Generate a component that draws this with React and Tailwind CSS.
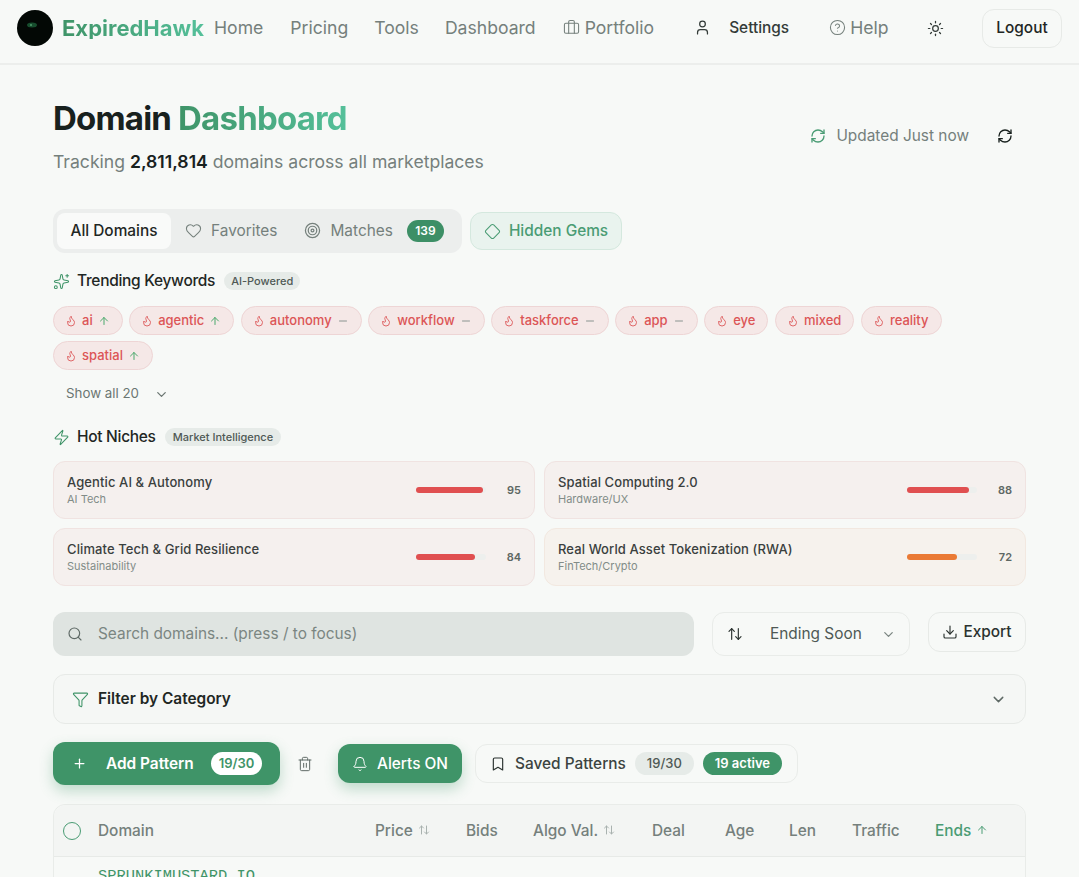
import {
  ArrowUp,
  ArrowUpDown,
  Bell,
  Bookmark,
  Briefcase,
  ChevronDown,
  CircleHelp,
  Diamond,
  Download,
  Filter,
  Flame,
  Heart,
  Minus,
  Plus,
  RefreshCw,
  Search,
  Sparkles,
  Sun,
  Target,
  Trash2,
  User,
  Zap,
} from "lucide-react";

const keywords = [
  { name: "ai", trend: "up" },
  { name: "agentic", trend: "up" },
  { name: "autonomy", trend: "flat" },
  { name: "workflow", trend: "flat" },
  { name: "taskforce", trend: "flat" },
  { name: "app", trend: "flat" },
  { name: "eye" },
  { name: "mixed" },
  { name: "reality" },
  { name: "spatial", trend: "up" },
];

const niches = [
  { name: "Agentic AI & Autonomy", cat: "AI Tech", score: 95 },
  { name: "Spatial Computing 2.0", cat: "Hardware/UX", score: 88 },
  { name: "Climate Tech & Grid Resilience", cat: "Sustainability", score: 84 },
  { name: "Real World Asset Tokenization (RWA)", cat: "FinTech/Crypto", score: 72, warm: true },
];

function Keyword({ name, trend }) {
  return (
    <span className="flex h-[29px] items-center gap-[5px] rounded-full border border-[#eed5d5] bg-[#f5e8e7] pl-[11px] pr-[12px] text-[13px] font-medium text-[#dc5556]">
      <Flame size={12} strokeWidth={1.75} />
      {name}
      {trend === "up" && <ArrowUp size={12} className="text-[#4aa96c]" />}
      {trend === "flat" && <Minus size={12} className="text-[#8a9490]" />}
    </span>
  );
}

function NicheCard({ name, cat, score, warm }) {
  return (
    <div
      className={
        warm
          ? "flex h-[58px] items-center rounded-xl border border-[#f2e8e0] bg-[#f6f2ed] pl-[13px] pr-[4px]"
          : "flex h-[58px] items-center rounded-xl border border-[#f0e3e1] bg-[#f5f0ee] pl-[13px] pr-[4px]"
      }
    >
      <div className="min-w-0 flex-1">
        <div className="text-[13px] font-medium leading-[18px] tracking-[0.1px] text-[#3a403e]">{name}</div>
        <div className="mt-[1px] text-[11px] leading-[15px] text-[#828c88]">{cat}</div>
      </div>
      <div className="h-[6px] w-[70px] rounded-full bg-[#edefed]">
        <div
          className={warm ? "h-full rounded-full bg-[#ea7a35]" : "h-full rounded-full bg-[#e04f50]"}
          style={{ width: `${score}%` }}
        />
      </div>
      <div className="w-[44px] pr-[9px] text-right text-[11px] font-semibold text-[#5d6763]">{score}</div>
    </div>
  );
}

function Th({ children, className = "", sort }) {
  return (
    <div className={`flex items-center gap-[5px] ${className}`}>
      {children}
      {sort && <ArrowUpDown size={12} className="text-[#a9b2af]" />}
    </div>
  );
}

export default function App() {
  return (
    <div
      className="h-[877px] overflow-hidden bg-[#f7f9f7] text-[#18211e]"
      style={{ fontFamily: "Inter, 'Liberation Sans', sans-serif" }}
    >
      <header className="flex h-[65px] items-center border-b-2 border-[#eceeec] pb-[7px] pl-[17px] pr-[17px]">
        <svg width="36" height="36" viewBox="0 0 36 36" className="shrink-0">
          <circle cx="18" cy="18" r="18" fill="#030805" />
          <ellipse cx="15" cy="15" rx="5" ry="2.5" fill="#174d2e" />
          <circle cx="14" cy="15" r="1" fill="#4f9d6e" />
        </svg>
        <span className="ml-[9px] bg-gradient-to-r from-[#3f9468] to-[#55c09a] bg-clip-text text-[22px] font-bold leading-none text-transparent">
          ExpiredHawk
        </span>
        <nav className="ml-[10px] flex items-center text-[17.6px] text-[#75807c]">
          <span>Home</span>
          <span className="ml-[27px]">Pricing</span>
          <span className="ml-[26px]">Tools</span>
          <span className="ml-[26px]">Dashboard</span>
          <span className="ml-[27px] flex items-center gap-[5px]">
            <Briefcase size={17} strokeWidth={1.5} />
            Portfolio
          </span>
        </nav>
        <div className="ml-[40px] flex items-center text-[15.4px] font-medium text-[#333b38]">
          <User size={17} strokeWidth={1.75} />
          <span className="ml-[18px]">Settings</span>
        </div>
        <div className="ml-[40px] flex items-center gap-[4px] text-[17.6px] text-[#75807c]">
          <CircleHelp size={17} strokeWidth={1.5} />
          Help
        </div>
        <Sun size={17} strokeWidth={1.75} className="ml-[38px] text-[#333b38]" />
        <button className="ml-auto h-[39px] w-[80px] rounded-xl border border-[#e7eae7] text-[15.4px] font-medium text-[#1f2724]">
          Logout
        </button>
      </header>

      <main className="px-[53px]">
        <div className="flex items-start justify-between pt-[31px]">
          <div>
            <h1 className="text-[33px] font-bold leading-[44px] tracking-[-0.8px]">
              Domain{" "}
              <span className="bg-gradient-to-r from-[#3f9468] to-[#55c09a] bg-clip-text text-transparent">Dashboard</span>
            </h1>
            <p className="mt-[10px] text-[17.6px] leading-[24px] text-[#75807c]">
              Tracking <span className="font-semibold text-[#18211e]">2,811,814</span> domains across all marketplaces
            </p>
          </div>
          <div className="mt-[28px] flex items-center text-[15.4px] text-[#75807c]">
            <RefreshCw size={16} className="text-[#4a9c74]" />
            <span className="ml-[10px]">Updated Just now</span>
            <RefreshCw size={16} className="ml-[28px] mr-[13px] text-[#18211e]" />
          </div>
        </div>

        <div className="mt-[35px] flex items-center gap-[8px]">
          <div className="flex h-[44px] items-center rounded-xl bg-[#eceeed] px-[4px] text-[15.4px]">
            <span className="flex h-[36px] w-[114px] items-center justify-center rounded-lg bg-[#f9faf9] font-medium text-[#1f2724]">
              All Domains
            </span>
            <span className="ml-[14px] flex items-center gap-[9px] text-[#75807c]">
              <Heart size={17} strokeWidth={1.5} />
              Favorites
            </span>
            <span className="ml-[27px] flex items-center gap-[9px] text-[#75807c]">
              <Target size={17} strokeWidth={1.75} />
              Matches
            </span>
            <span className="ml-[14px] mr-[14px] flex h-[22px] w-[37px] items-center justify-center rounded-full bg-[#3d8f66] text-[12px] font-semibold text-white">
              139
            </span>
          </div>
          <div className="flex h-[38px] items-center gap-[8px] rounded-xl border border-[#d4e8de] bg-[#e9f3ee] px-[13px] text-[15.4px] font-medium text-[#4a9c74]">
            <Diamond size={17} strokeWidth={1.5} />
            Hidden Gems
          </div>
        </div>

        <div className="mt-[17px] flex h-[22px] items-center">
          <Sparkles size={17} strokeWidth={1.5} className="text-[#3f9468]" />
          <span className="ml-[7px] text-[15.5px] font-medium tracking-[-0.3px] text-[#1f2724]">Trending Keywords</span>
          <span className="ml-[9px] rounded-full bg-[#e6ebe8] px-[7px] py-[1px] text-[11px] font-medium text-[#4f5955]">
            AI-Powered
          </span>
        </div>

        <div className="mt-[14px] flex flex-wrap gap-x-[6.5px] gap-y-[6px]">
          {keywords.map((k) => (
            <Keyword key={k.name} name={k.name} trend={k.trend} />
          ))}
        </div>

        <div className="mt-[14px] flex h-[20px] items-center pl-[13px] text-[13.3px] text-[#6b7672]">
          Show all 20
          <ChevronDown size={15} className="ml-[15px]" />
        </div>

        <div className="mt-[22px] flex h-[22px] items-center">
          <Zap size={17} strokeWidth={1.5} className="text-[#3f9468]" />
          <span className="ml-[7px] text-[15.5px] font-medium tracking-[-0.3px] text-[#1f2724]">Hot Niches</span>
          <span className="ml-[9px] rounded-full bg-[#e6ebe8] px-[8px] py-[1px] text-[11px] font-medium text-[#4f5955]">
            Market Intelligence
          </span>
        </div>

        <div className="mt-[13px] grid grid-cols-2 gap-[9px]">
          {niches.map((n) => (
            <NicheCard key={n.name} {...n} />
          ))}
        </div>

        <div className="mt-[26px] flex items-start">
          <div className="flex h-[44px] flex-1 items-center rounded-xl bg-[#dfe4e1] pl-[14px] text-[15.4px] text-[#7b8682]">
            <Search size={16} strokeWidth={1.75} className="text-[#5f6a66]" />
            <span className="ml-[15px]">Search domains... (press / to focus)</span>
          </div>
          <div className="ml-[18px] flex h-[44px] w-[198px] items-center rounded-xl border border-[#e9ece9] pl-[14px] text-[15.4px] text-[#4f5955]">
            <ArrowUpDown size={16} strokeWidth={1.75} className="text-[#2b3330]" />
            <span className="ml-[27px]">Ending Soon</span>
            <ChevronDown size={15} className="ml-[19px] text-[#7b8682]" />
          </div>
          <div className="ml-[18px] flex h-[40px] w-[98px] items-center justify-center gap-[5px] rounded-xl border border-[#e7eae7] text-[15.4px] font-medium text-[#2b3330]">
            <Download size={16} strokeWidth={1.75} />
            Export
          </div>
        </div>

        <div className="mt-[18px] flex h-[50px] items-center rounded-xl border border-[#e7eae7] bg-[#f5f7f5] pl-[18px] pr-[18px]">
          <Filter size={17} strokeWidth={1.5} className="text-[#3f9468]" />
          <span className="ml-[9px] text-[15.4px] font-semibold text-[#1f2724]">Filter by Category</span>
          <ChevronDown size={17} className="ml-auto text-[#5f6a66]" />
        </div>

        <div className="mt-[18px] flex items-center">
          <div className="flex h-[43px] w-[227px] items-center rounded-xl bg-[#3f9468] pl-[19px] text-[15.4px] font-semibold text-white shadow-[0_6px_14px_rgba(63,148,104,0.3)]">
            <Plus size={15} />
            <span className="ml-[19px]">Add Pattern</span>
            <span className="ml-[17px] rounded-full bg-white px-[8px] py-[2px] text-[13px] font-semibold text-[#3f9468]">
              19/30
            </span>
          </div>
          <Trash2 size={16} strokeWidth={1.5} className="ml-[17px] text-[#5f6a66]" />
          <div className="ml-[25px] flex h-[39px] w-[124px] items-center justify-center gap-[9px] rounded-xl bg-[#3f9468] text-[15.4px] font-medium text-white shadow-[0_6px_14px_rgba(63,148,104,0.3)]">
            <Bell size={16} strokeWidth={1.5} />
            Alerts ON
          </div>
          <div className="ml-[13px] flex h-[39px] w-[323px] items-center rounded-xl border border-[#e9ece9] pl-[14px] text-[15.4px] font-medium text-[#3b4441]">
            <Bookmark size={16} strokeWidth={1.75} className="text-[#2b3330]" />
            <span className="ml-[9px]">Saved Patterns</span>
            <span className="ml-[9px] rounded-full bg-[#e6ebe8] px-[12px] py-[2px] text-[13px] text-[#4f5955]">19/30</span>
            <span className="ml-[9px] rounded-full bg-[#3f9468] px-[12px] py-[2px] text-[13px] font-semibold text-white">
              19 active
            </span>
          </div>
        </div>

        <div className="mt-[19px] rounded-t-xl border border-[#e9ece9]">
          <div className="flex h-[52px] items-center rounded-t-xl border-b border-[#e7eae7] bg-[#f3f5f3] text-[15.4px] font-medium text-[#75807c]">
            <span className="ml-[9px] h-[18px] w-[18px] rounded-full border border-[#4a9c74]" />
            <Th className="ml-[17px] w-[277px]">Domain</Th>
            <Th className="w-[91px]" sort>Price</Th>
            <Th className="w-[67px]">Bids</Th>
            <Th className="w-[119px]" sort>Algo Val.</Th>
            <Th className="w-[73px]">Deal</Th>
            <Th className="w-[64px]">Age</Th>
            <Th className="w-[63px]">Len</Th>
            <Th className="w-[83px]">Traffic</Th>
            <span className="flex items-center gap-[5px] text-[#4a9c74]">
              Ends
              <ArrowUp size={12} />
            </span>
          </div>
          <div className="pl-[44px] pt-[8px] text-[15.4px] font-medium text-[#3f9468]" style={{ fontFamily: "'Liberation Mono', monospace" }}>
            SPRUNKIMUSTARD.IO
          </div>
        </div>
      </main>
    </div>
  );
}
